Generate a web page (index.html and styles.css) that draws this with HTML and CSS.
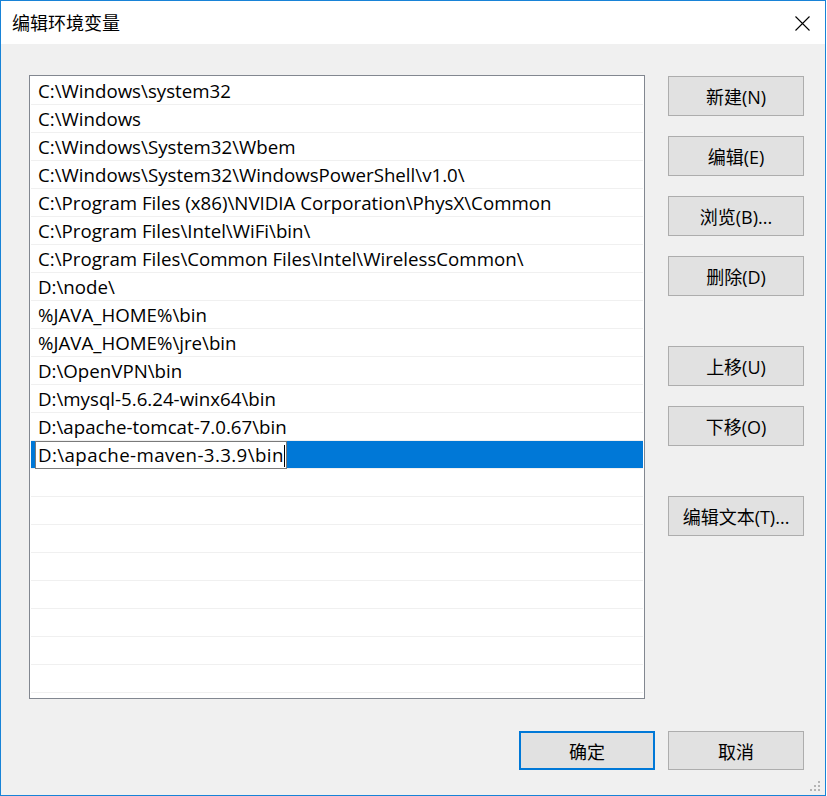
FILE: index.html
```html
<!DOCTYPE html>
<html lang="zh-CN">
<head>
<meta charset="utf-8">
<title>编辑环境变量</title>
<link rel="stylesheet" href="styles.css">
</head>
<body>
<div class="window">
  <div class="titlebar">
    <span class="title">编辑环境变量</span>
    <svg class="close" width="15" height="15" viewBox="0 0 15 15"><path d="M0.5 0.5 L14.5 14.5 M14.5 0.5 L0.5 14.5" stroke="#000" stroke-width="1.1" fill="none"/></svg>
  </div>
  <div class="content">
    <div class="main">
      <div class="list">
        <div class="row">C:\Windows\system32</div>
        <div class="row">C:\Windows</div>
        <div class="row">C:\Windows\System32\Wbem</div>
        <div class="row">C:\Windows\System32\WindowsPowerShell\v1.0\</div>
        <div class="row">C:\Program Files (x86)\NVIDIA Corporation\PhysX\Common</div>
        <div class="row">C:\Program Files\Intel\WiFi\bin\</div>
        <div class="row">C:\Program Files\Common Files\Intel\WirelessCommon\</div>
        <div class="row">D:\node\</div>
        <div class="row">%JAVA_HOME%\bin</div>
        <div class="row">%JAVA_HOME%\jre\bin</div>
        <div class="row">D:\OpenVPN\bin</div>
        <div class="row">D:\mysql-5.6.24-winx64\bin</div>
        <div class="row">D:\apache-tomcat-7.0.67\bin</div>
        <div class="row selected"><span class="editbox">D:\apache-maven-3.3.9\bin<span class="caret"></span></span></div>
        <div class="row"></div>
        <div class="row"></div>
        <div class="row"></div>
        <div class="row"></div>
        <div class="row"></div>
        <div class="row"></div>
        <div class="row"></div>
        <div class="row"></div>
      </div>
      <div class="side">
        <button class="btn">新建(N)</button>
        <button class="btn">编辑(E)</button>
        <button class="btn">浏览(B)...</button>
        <button class="btn">删除(D)</button>
        <button class="btn spaced">上移(U)</button>
        <button class="btn">下移(O)</button>
        <button class="btn spaced">编辑文本(T)...</button>
      </div>
    </div>
    <div class="footer">
      <button class="btn primary">确定</button>
      <button class="btn">取消</button>
    </div>
  </div>
  <svg class="grip" width="12" height="12" viewBox="0 0 12 12">
    <rect x="8" y="0" width="2" height="2" fill="#b4b4b4"/>
    <rect x="4" y="4" width="2" height="2" fill="#b4b4b4"/>
    <rect x="8" y="4" width="2" height="2" fill="#b4b4b4"/>
    <rect x="0" y="8" width="2" height="2" fill="#b4b4b4"/>
    <rect x="4" y="8" width="2" height="2" fill="#b4b4b4"/>
    <rect x="8" y="8" width="2" height="2" fill="#b4b4b4"/>
  </svg>
</div>
</body>
</html>
```
FILE: styles.css
```css
* { box-sizing: border-box; }
html, body {
  margin: 0;
  padding: 0;
  background: #ffffff;
}
body {
  font-family: "Open Sans", "Noto Sans CJK SC", sans-serif;
  font-size: 18.7px;
  color: #000;
}
.window {
  position: relative;
  width: 826px;
  height: 796px;
  border: 1px solid #1883d7;
  background: #f0f0f0;
  display: flex;
  flex-direction: column;
}
.titlebar {
  height: 43px;
  background: #ffffff;
  display: flex;
  align-items: center;
  justify-content: space-between;
  padding: 0 15px 0 11px;
}
.title {
  font-family: "Noto Sans CJK SC", sans-serif;
  font-size: 18px;
  line-height: 20px;
  margin-top: -2px;
}
.close { display: block; margin-top: 1px; }
.content {
  padding: 31px 21px 0 28px;
  display: flex;
  flex-direction: column;
}
.main {
  display: flex;
  gap: 23px;
}
.list {
  width: 616px;
  height: 624px;
  border: 1px solid #828790;
  background: #ffffff;
  padding: 1px 1px 0 1px;
  overflow: hidden;
}
.row {
  position: relative;
  height: 28px;
  border-bottom: 1px solid #f0f0f0;
  padding-left: 7px;
  line-height: 27px;
  white-space: nowrap;
}
.row.selected {
  background: #0078d7;
}
.editbox {
  position: absolute;
  left: 4px;
  top: 0;
  height: 28px;
  width: 252px;
  background: #ffffff;
  border: 1px solid #7a7a7a;
  padding-left: 2px;
  line-height: 25px;
  letter-spacing: 0.4px;
  color: #000;
}
.caret {
  display: inline-block;
  width: 1px;
  height: 22px;
  background: #000;
  vertical-align: middle;
  margin-left: 0;
  margin-top: -3px;
}
.side {
  display: flex;
  flex-direction: column;
  gap: 20px;
  padding-top: 1px;
}
.btn {
  width: 136px;
  height: 40px;
  background: #e1e1e1;
  border: 1px solid #adadad;
  font-family: "Open Sans", "Noto Sans CJK SC", sans-serif;
  font-size: 18px;
  color: #000;
  padding: 0;
  margin: 0;
}
.side .spaced { margin-top: 30px; }
.footer {
  display: flex;
  justify-content: flex-end;
  gap: 13px;
  margin-top: 32px;
}
.footer .btn { height: 39px; }
.btn.primary {
  border: 2px solid #0078d7;
}
.grip {
  position: absolute;
  right: 3px;
  bottom: 2px;
}
```
